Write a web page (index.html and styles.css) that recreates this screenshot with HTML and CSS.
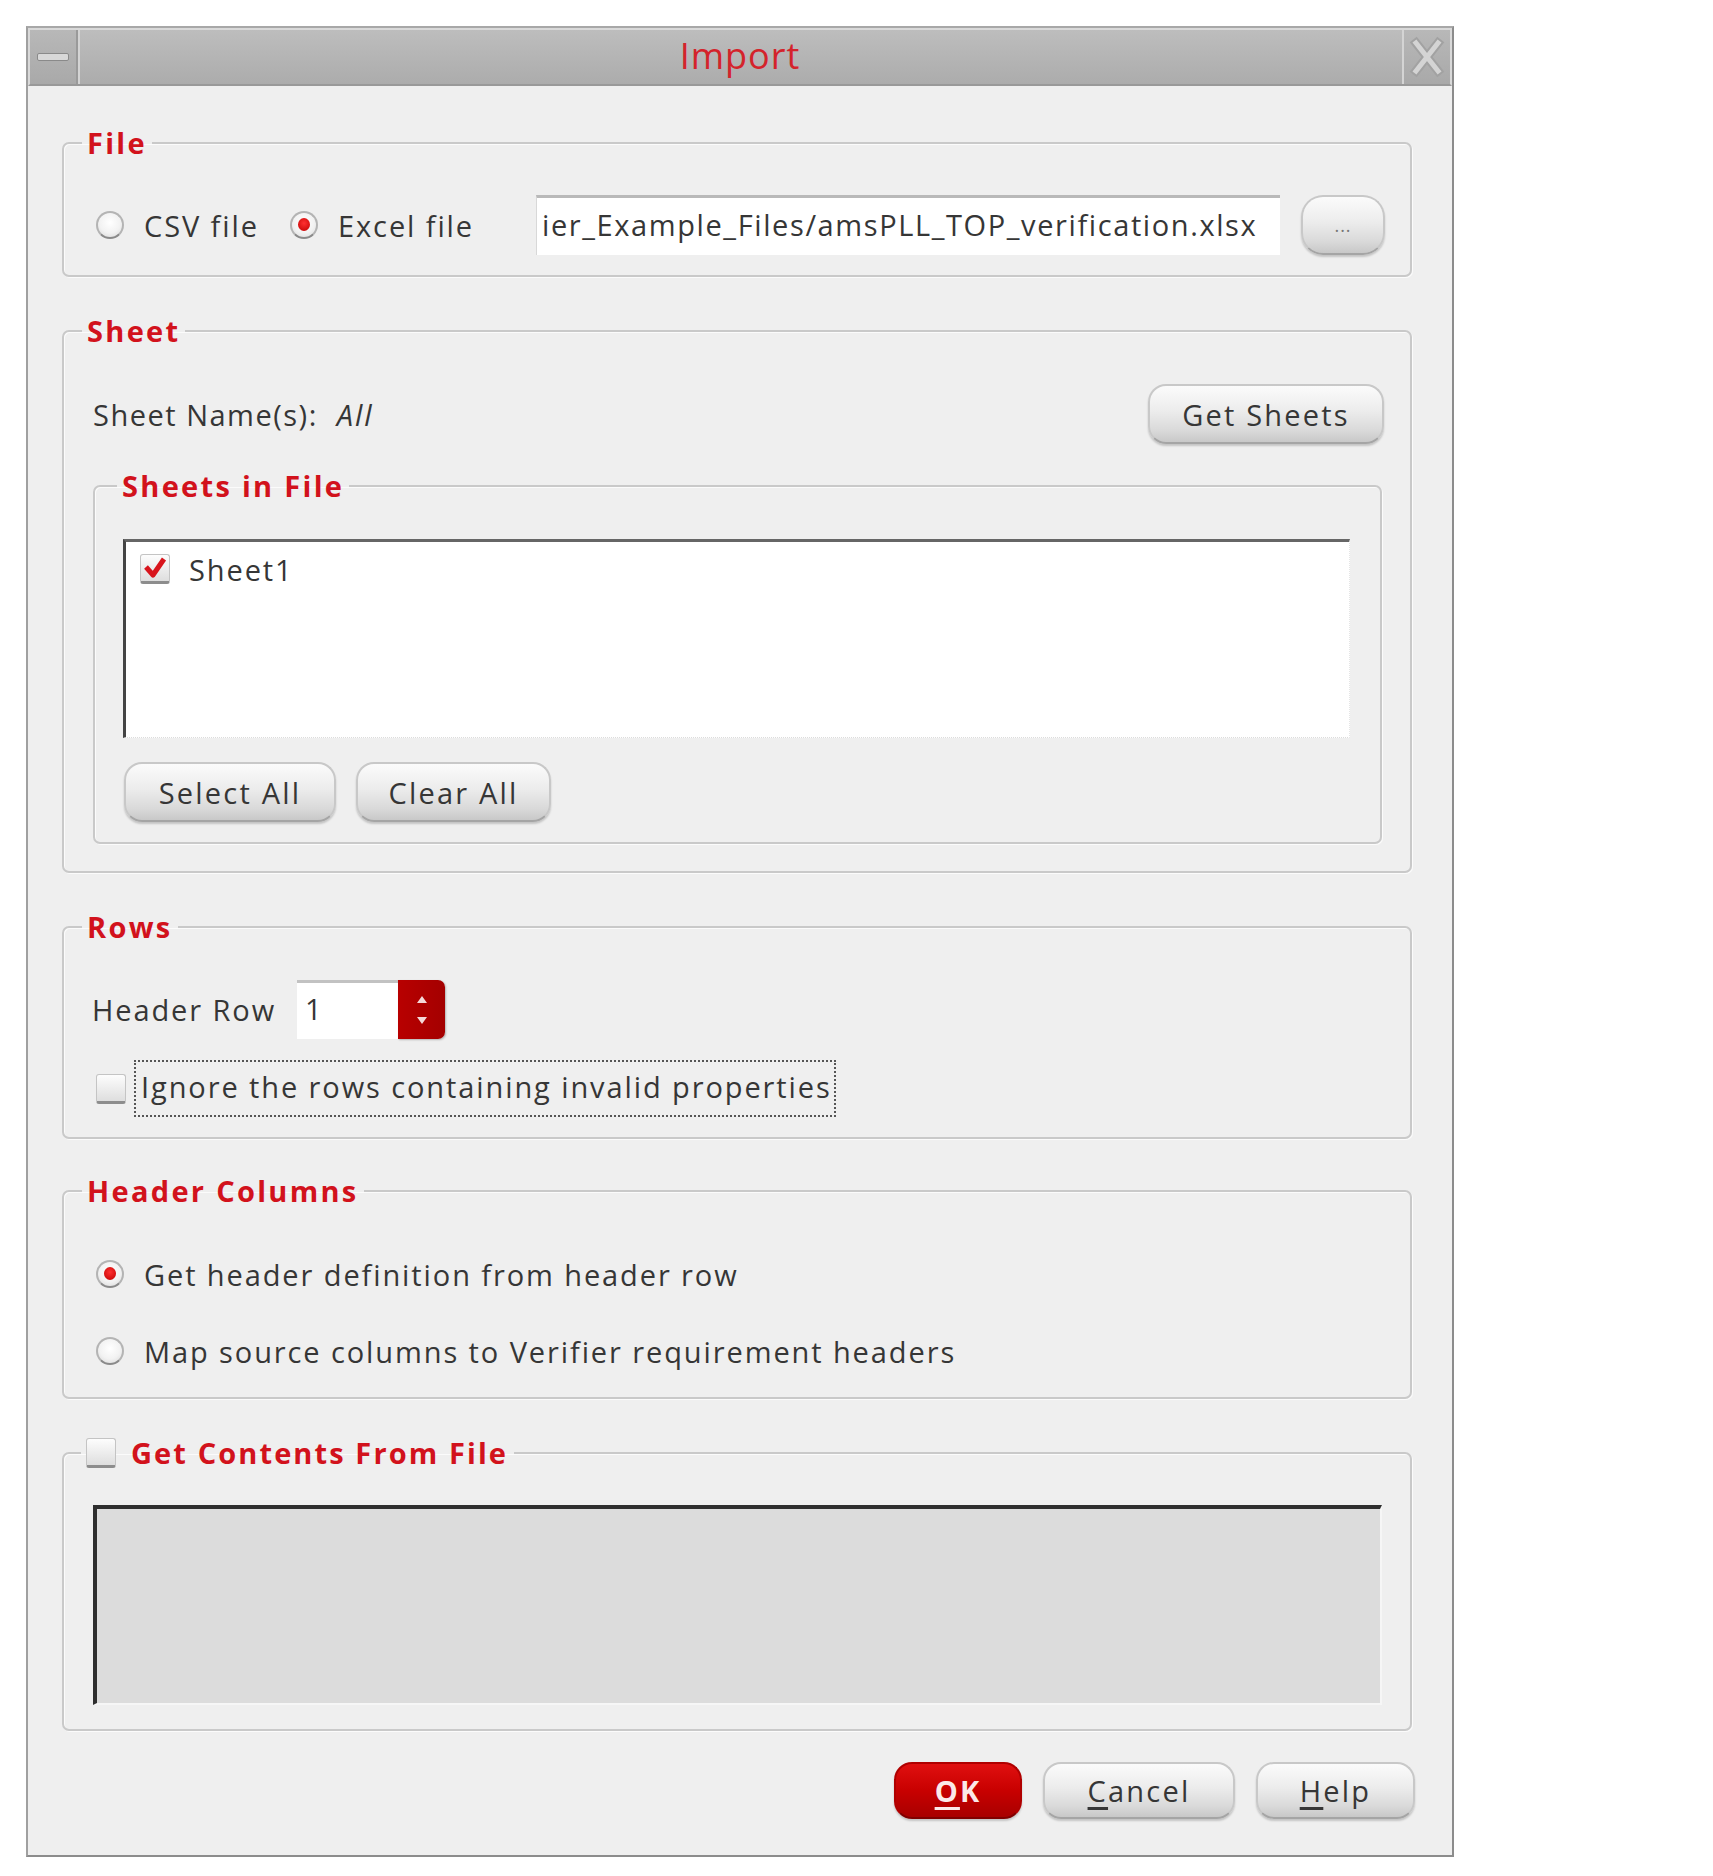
FILE: index.html
```html
<!DOCTYPE html>
<html>
<head>
<meta charset="utf-8">
<title>Import</title>
<link rel="stylesheet" href="styles.css">
</head>
<body>
<div class="window">
  <div class="titlebar">
    <div class="tb-btn tb-min"><span class="min-bar"></span></div>
    <div class="tb-title">Import</div>
    <div class="tb-btn tb-close">
      <svg width="40" height="42" viewBox="0 0 40 42">
        <path d="M9 7 L31 35 M31 7 L9 35" stroke="#a2a2a2" stroke-width="9" stroke-linecap="square" fill="none"/>
        <path d="M9 7 L31 35 M31 7 L9 35" stroke="#d4d4d4" stroke-width="5" stroke-linecap="square" fill="none"/>
      </svg>
    </div>
  </div>

  <div class="content">
    <fieldset class="group g-file">
      <legend>File</legend>
      <div class="file-body">
        <label class="radio r-csv"><span class="rb"></span><span>CSV file</span></label>
        <label class="radio r-excel"><span class="rb on"></span><span>Excel file</span></label>
        <div class="textfield">ier_Example_Files/amsPLL_TOP_verification.xlsx</div>
        <button class="btn btn-dots">...</button>
      </div>
    </fieldset>

    <fieldset class="group g-sheet">
      <legend>Sheet</legend>
      <div class="sheet-body">
        <div class="name-row">
          <span class="lbl">Sheet Name(s):</span><span class="all">All</span>
          <button class="btn btn-getsheets">Get Sheets</button>
        </div>
        <fieldset class="group sub">
          <legend>Sheets in File</legend>
          <div class="sub-body">
            <div class="listbox">
              <div class="list-item">
                <span class="cb cb-checked">
                  <svg width="26" height="24" viewBox="0 0 26 24"><path d="M4 11 L11 19 L22 3" stroke="#d8141c" stroke-width="5" fill="none" stroke-linejoin="round"/></svg>
                </span>
                <span>Sheet1</span>
              </div>
            </div>
            <div class="btn-row">
              <button class="btn btn-select">Select All</button>
              <button class="btn btn-clear">Clear All</button>
            </div>
          </div>
        </fieldset>
      </div>
    </fieldset>

    <fieldset class="group g-rows">
      <legend>Rows</legend>
      <div class="rows-body">
        <div class="hr-row">
          <span class="lbl hr-lbl">Header Row</span>
          <div class="spin">
            <div class="spin-field">1</div>
            <div class="spin-btns">
              <svg width="20" height="40" viewBox="0 0 20 40"><path d="M10 6 L15 13 L5 13 Z M10 34 L15 27 L5 27 Z" fill="#f4d8d8"/></svg>
            </div>
          </div>
        </div>
        <div class="ignore-row">
          <span class="cb"></span>
          <span class="focus">Ignore the rows containing invalid properties</span>
        </div>
      </div>
    </fieldset>

    <fieldset class="group g-cols">
      <legend>Header Columns</legend>
      <div class="cols-body">
        <label class="radio"><span class="rb on"></span><span>Get header definition from header row</span></label>
        <label class="radio"><span class="rb"></span><span>Map source columns to Verifier requirement headers</span></label>
      </div>
    </fieldset>

    <fieldset class="group g-contents">
      <legend><span class="cb"></span><span>Get Contents From File</span></legend>
      <div class="contents-body">
        <div class="contents-area"></div>
      </div>
    </fieldset>

    <div class="footer">
      <button class="btn btn-ok"><u>O</u>K</button>
      <button class="btn btn-cancel"><u>C</u>ancel</button>
      <button class="btn btn-help"><u>H</u>elp</button>
    </div>
  </div>
</div>
</body>
</html>
```

FILE: styles.css
```css
* { box-sizing: border-box; }
html, body { margin: 0; padding: 0; background: #ffffff; }
body {
  font-family: "Open Sans", "Noto Sans", sans-serif;
  color: #363636;
  font-size: 29px;
  font-weight: 500;
  letter-spacing: 1.9px;
}

.window {
  margin: 26px 0 0 26px;
  width: 1428px;
  height: 1831px;
  border: 2px solid #8c8c8c;
  border-top-color: #a8a8a8;
  border-left-color: #a0a0a0;
  background: #efefef;
  display: flex;
  flex-direction: column;
}

/* title bar */
.titlebar {
  height: 58px;
  display: flex;
  align-items: stretch;
  background: linear-gradient(#bdbdbd, #acacac);
  border: 2px solid #d9d9d9;
  border-bottom: 2px solid #999;
}
.tb-btn {
  width: 48px;
  display: flex;
  align-items: center;
  justify-content: center;
  background: linear-gradient(#b8b8b8, #a9a9a9);
}
.tb-min { border-right: 2px solid #9a9a9a; box-shadow: 2px 0 0 #d4d4d4; }
.tb-close { border-left: 2px solid #d4d4d4; }
.min-bar {
  width: 32px;
  height: 8px;
  background: #d8d8d8;
  border: 1px solid #8a8a8a;
  border-radius: 2px;
}
.tb-title {
  flex: 1;
  text-align: center;
  color: #d4232b;
  font-size: 36px;
  font-weight: 400;
  line-height: 52px;
  letter-spacing: 1px;
}

.content {
  flex: 1;
  display: flex;
  flex-direction: column;
  padding: 42px 40px 0 34px;
}

/* group frames */
.group {
  margin: 0;
  padding: 0;
  min-width: 0;
  border: 2px solid #c9c9c9;
  border-radius: 7px;
  box-shadow: inset 1px 1px 0 #fbfbfb, 1px 1px 0 #fbfbfb;
}
.group > legend {
  margin-left: 18px;
  padding: 0 5px;
  font-weight: 700;
  font-size: 29px;
  line-height: 30px;
  color: #d2121c;
  letter-spacing: 2.3px;
}

.g-sheet { margin-top: 39px; }
.g-rows { margin-top: 39px; }
.g-cols { margin-top: 37px; }
.g-contents { margin-top: 36px; }

/* radio */
.radio {
  display: flex;
  align-items: center;
  gap: 20px;
  height: 40px;
}
.rb {
  width: 28px;
  height: 28px;
  border-radius: 50%;
  border: 2px solid #b4b4b4;
  border-bottom-color: #8a8a8a;
  background: radial-gradient(circle at 50% 40%, #ffffff 0%, #f2f2f2 55%, #d6d6d6 100%);
  position: relative;
  flex: none;
}
.rb.on::after {
  content: "";
  position: absolute;
  left: 6px;
  top: 5px;
  width: 12px;
  height: 13px;
  border-radius: 50%;
  background: radial-gradient(circle at 50% 40%, #ff3030, #c00000);
}

/* checkbox */
.cb {
  width: 30px;
  height: 30px;
  flex: none;
  border: 1px solid #c4c4c4;
  border-bottom: 3px solid #8d8d8d;
  border-radius: 3px;
  background: linear-gradient(#fdfdfd, #dedede);
  display: flex;
  align-items: center;
  justify-content: center;
}

/* buttons */
.btn {
  font-family: inherit;
  font-size: 29px;
  font-weight: 500;
  letter-spacing: 2.2px;
  color: #363636;
  height: 60px;
  border: 2px solid #c8c8c8;
  border-bottom-color: #a5a5a5;
  border-radius: 18px;
  background: linear-gradient(#fbfbfb 0%, #ececec 45%, #d9d9d9 80%, #c8c8c8 100%);
  box-shadow: 0 2px 2px rgba(0,0,0,0.18);
  padding: 0;
  cursor: default;
}
.btn u { text-decoration-thickness: 3px; text-underline-offset: 5px; }

/* file */
.file-body {
  display: flex;
  align-items: center;
  padding: 37px 25px 20px 32px;
}
.r-csv { width: 194px; flex: none; }
.r-excel { width: 246px; flex: none; }
.textfield {
  flex: 1;
  height: 60px;
  background: #ffffff;
  border-top: 3px solid #b9b9b9;
  border-left: 1px solid #d8d8d8;
  padding: 0 8px 0 5px;
  line-height: 54px;
  white-space: nowrap;
  overflow: hidden;
  letter-spacing: 1.6px;
}
.btn-dots {
  margin-left: 21px;
  width: 84px;
  font-size: 18px;
  letter-spacing: 1px;
  color: #777;
  border-radius: 22px;
}

/* sheet */
.sheet-body {
  padding: 38px 26px 27px 29px;
}
.name-row {
  display: flex;
  align-items: center;
  height: 60px;
}
.name-row .lbl { letter-spacing: 1.5px; }
.all {
  font-style: italic;
  margin-left: 19px;
}
.btn-getsheets {
  margin-left: auto;
  width: 236px;
}
.sub { margin-top: 27px; margin-right: 2px; }
.sub > legend { margin-left: 22px; }
.sub-body {
  padding: 38px 30px 20px 28px;
}
.listbox {
  height: 199px;
  background: #ffffff;
  border-top: 3px solid #666;
  border-left: 3px solid #444;
  border-right: 1px dotted #e4e4e4;
  border-bottom: 1px dotted #dcdcdc;
  padding: 5px 0 0 14px;
}
.list-item {
  display: flex;
  align-items: center;
  gap: 19px;
  height: 44px;
}
.btn-row {
  display: flex;
  gap: 20px;
  margin-top: 24px;
}
.btn-select { width: 212px; margin-left: 1px; }
.btn-clear { width: 195px; }

/* rows */
.rows-body {
  padding: 38px 20px 20px 28px;
}
.hr-row {
  display: flex;
  align-items: center;
  height: 59px;
}
.hr-lbl { width: 205px; flex: none; }
.spin {
  display: flex;
  height: 59px;
  width: 148px;
}
.spin-field {
  flex: 1;
  background: #fff;
  border-top: 3px solid #c2c2c2;
  padding-left: 8px;
  line-height: 52px;
}
.spin-btns {
  width: 47px;
  background: linear-gradient(90deg, #b80000, #a40000);
  border-radius: 0 7px 7px 0;
  display: flex;
  align-items: center;
  justify-content: center;
  box-shadow: 1px 1px 2px rgba(0,0,0,0.25);
}
.ignore-row {
  display: flex;
  align-items: center;
  margin-top: 21px;
  height: 57px;
}
.ignore-row .cb { margin-left: 4px; }
.focus {
  margin-left: 8px;
  height: 57px;
  width: 702px;
  border: 2px dotted #555;
  padding-left: 5px;
  line-height: 50px;
  white-space: nowrap;
  overflow: hidden;
}

/* header columns */
.cols-body {
  padding: 48px 20px 26px 32px;
  display: flex;
  flex-direction: column;
  gap: 37px;
}

/* contents */
.g-contents > legend {
  display: flex;
  align-items: center;
  gap: 15px;
  height: 36px;
  line-height: 36px;
  margin-left: 17px;
  padding: 0 6px 0 5px;
  letter-spacing: 2.1px;
}
.contents-body {
  padding: 34px 28px 24px 29px;
}
.contents-area {
  height: 200px;
  background: #dcdcdc;
  border-top: 4px solid #2e2e2e;
  border-left: 4px solid #2e2e2e;
  border-bottom: 2px solid #f6f6f6;
  border-right: 2px solid #f6f6f6;
}

/* footer */
.footer {
  display: flex;
  justify-content: flex-end;
  gap: 21px;
  margin-top: 31px;
  margin-right: -3px;
}
.footer .btn { height: 57px; }
.btn-ok {
  width: 128px;
  color: #fbe9e9;
  font-weight: 700;
  background: linear-gradient(#e01010 0%, #c80000 50%, #a80000 100%);
  border-color: #b00000;
  border-bottom-color: #800000;
}
.btn-cancel { width: 192px; }
.btn-help { width: 159px; }
```
